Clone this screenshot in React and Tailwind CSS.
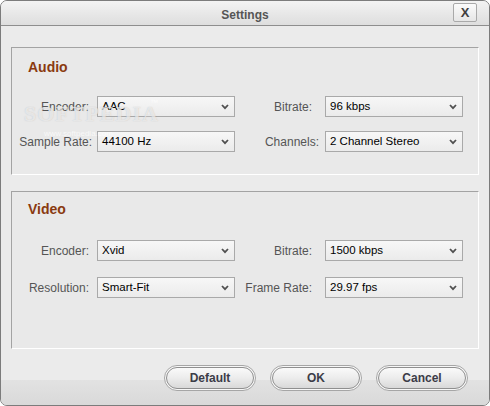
import React from "react";

const sans = { fontFamily: '"Liberation Sans", Arial, sans-serif' };

const Chevron = () => (
  <svg width="8" height="6" viewBox="0 0 8 6" className="shrink-0">
    <path d="M1 1 L4 4.2 L7 1" fill="none" stroke="#505050" strokeWidth="1.8" />
  </svg>
);

const Select = ({ value }) => (
  <div className="flex h-[21px] w-[138px] items-center justify-between border border-[#a9a9a9] bg-gradient-to-b from-[#f7f7f7] to-[#ebebeb] pl-[4px] pr-[5px]">
    <span className="text-[11.5px] leading-none text-black">{value}</span>
    <Chevron />
  </div>
);

const Field = ({ label, value, width, gap, shift }) => (
  <div className="flex items-center">
    <div className={`${width} text-right text-[12px] leading-none text-[#555]`} style={sans}>
      <span className={shift}>{label}</span>
    </div>
    <div className={gap} />
    <Select value={value} />
  </div>
);

const Row = ({ left, right, className }) => (
  <div className={`flex items-center ${className}`}>
    <Field {...left} width="w-[77px]" gap="w-[8px]" />
    <Field {...right} width="w-[77px]" gap="w-[13px]" />
  </div>
);

const Panel = ({ title, height, pt, titleGap, rows }) => (
  <div
    className={`${height} ${pt} flex flex-col border border-t-[#a3a3a3] border-l-[#a3a3a3] border-b-white border-r-white bg-[#e9e9e9]`}
  >
    <div className="pl-[16px] text-[14px] font-bold leading-[17px] text-[#8a3a10]" style={sans}>
      {title}
    </div>
    <div className={titleGap} />
    {rows}
  </div>
);

const Button = ({ children }) => (
  <div className="h-[26px] w-[92px] rounded-full border border-[#a6a6a6] bg-[#f7f7f7] p-[1px]">
    <div
      className="flex h-full w-full items-center justify-center rounded-full border border-[#8f8f8f] bg-gradient-to-b from-[#fafafa] via-[#ececec] to-[#d9d9d9] text-[12px] font-bold text-[#3c3c48]"
      style={sans}
    >
      {children}
    </div>
  </div>
);

export default function App() {
  return (
    <div className="h-[406px] w-[490px] bg-white" style={sans}>
      <div className="relative flex h-[406px] w-[490px] flex-col overflow-hidden rounded-[7px] border border-[#7c7c7c] bg-[#ebebeb]">
        {/* title bar */}
        <div className="flex h-[25px] shrink-0 items-center justify-center border-b border-[#8e8e8e] bg-gradient-to-b from-[#f3f3f3] to-[#dedede] pt-[4px]">
          <span className="text-[12px] font-bold text-[#555]">Settings</span>
          <div className="absolute right-[12px] top-[2px] flex h-[19px] w-[24px] items-center justify-center rounded-[2px] border border-[#a9a9a9] bg-gradient-to-b from-[#fbfbfb] to-[#e6e6e6]">
            <span className="text-[13px] font-bold leading-none text-[#404040]">X</span>
          </div>
        </div>

        <div className="flex flex-col gap-[16px] px-[10px] pt-[21px]">
          <Panel
            title="Audio"
            height="h-[128px]"
            pt="pt-[11px]"
            titleGap="h-[20px]"
            rows={
              <>
                <Row
                  left={{ label: "Encoder:", value: "AAC" }}
                  right={{ label: "Bitrate:", value: "96 kbps" }}
                />
                <Row
                  className="mt-[14px]"
                  left={{ label: "Sample Rate:", value: "44100 Hz", shift: "mr-[-3px]" }}
                  right={{ label: "Channels:", value: "2 Channel Stereo", shift: "mr-[-7px]" }}
                />
              </>
            }
          />
          <Panel
            title="Video"
            height="h-[158px]"
            pt="pt-[9px]"
            titleGap="h-[22px]"
            rows={
              <>
                <Row
                  left={{ label: "Encoder:", value: "Xvid" }}
                  right={{ label: "Bitrate:", value: "1500 kbps" }}
                />
                <Row
                  className="mt-[16px]"
                  left={{ label: "Resolution:", value: "Smart-Fit" }}
                  right={{ label: "Frame Rate:", value: "29.97 fps" }}
                />
              </>
            }
          />
        </div>

        {/* footer */}
        <div className="relative mt-auto h-[57px]">
          <div className="absolute bottom-0 left-0 right-0 h-[25px] bg-gradient-to-b from-[#e2e2e2] to-[#d9d9d9]" />
          <div className="relative flex justify-end gap-[14px] pr-[21px] pt-[16px]">
            <Button>Default</Button>
            <Button>OK</Button>
            <Button>Cancel</Button>
          </div>
        </div>

        {/* watermark */}
        <div className="pointer-events-none absolute left-[23px] top-[96px] select-none">
          <span
            className="text-[22px] font-bold tracking-[1px] text-white/60"
            style={{ fontFamily: '"Liberation Serif", serif', textShadow: "0 0 1px rgba(150,150,150,0.5)" }}
          >
            SOFTPEDIA
          </span>
          <span className="absolute left-[126px] top-[0px] text-[8px] text-white/70">™</span>
        </div>
        <div className="pointer-events-none absolute left-[43px] top-[127px] text-[8px] text-white/70">
          www.softpedia.com
        </div>
      </div>
    </div>
  );
}
